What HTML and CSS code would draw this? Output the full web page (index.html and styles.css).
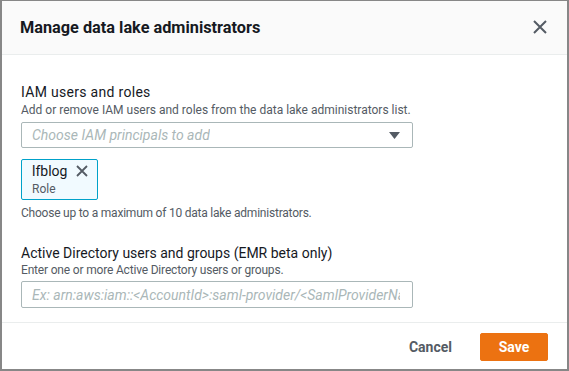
FILE: index.html
```html
<!DOCTYPE html>
<html>
<head>
<meta charset="utf-8">
<link rel="stylesheet" href="styles.css">
</head>
<body>
<div class="modal">
  <div class="header">
    <h1 class="title">Manage data lake administrators</h1>
    <svg class="close" width="14" height="14" viewBox="0 0 14 14"><path d="M1 1 L13 13 M13 1 L1 13" stroke="#545b64" stroke-width="2" fill="none"/></svg>
  </div>
  <div class="body">
    <div class="field field1">
      <div class="label">IAM users and roles</div>
      <div class="desc">Add or remove IAM users and roles from the data lake administrators list.</div>
      <div class="select">
        <span class="placeholder">Choose IAM principals to add</span>
        <svg class="caret" width="11" height="7" viewBox="0 0 11 7"><path d="M0 0 H11 L5.5 7 Z" fill="#545b64"/></svg>
      </div>
      <div class="token">
        <div class="token-text">
          <div class="token-name">lfblog</div>
          <div class="token-sub">Role</div>
        </div>
        <svg class="token-x" width="12" height="12" viewBox="0 0 12 12"><path d="M1 1 L11 11 M11 1 L1 11" stroke="#545b64" stroke-width="1.8" fill="none"/></svg>
      </div>
      <div class="hint">Choose up to a maximum of 10 data lake administrators.</div>
    </div>
    <div class="field field2">
      <div class="label">Active Directory users and groups (EMR beta only)</div>
      <div class="desc">Enter one or more Active Directory users or groups.</div>
      <div class="input">
        <span class="placeholder">Ex: arn:aws:iam::&lt;AccountId&gt;:saml-provider/&lt;SamlProviderName&gt;</span>
      </div>
    </div>
  </div>
  <div class="footer">
    <button class="btn-link">Cancel</button>
    <button class="btn-primary">Save</button>
  </div>
</div>
</body>
</html>
```

FILE: styles.css
```css
* { box-sizing: border-box; }
html, body { margin: 0; padding: 0; background: #fff; }
body { font-family: Roboto, "Liberation Sans", sans-serif; color: #16191f; }
.modal {
  width: 569px;
  height: 371px;
  border: 2px solid #878787;
  border-top-width: 1px;
  display: flex;
  flex-direction: column;
  overflow: hidden;
}
.header {
  height: 54px;
  flex: none;
  background: #fafafa;
  border-bottom: 1px solid #eaeded;
  display: flex;
  align-items: center;
  justify-content: space-between;
  padding: 0 20px 0 18px;
}
.title {
  margin: 0;
  font-size: 16.3px;
  font-weight: 700;
  color: #16191f;
}
.close { display: block; margin-top: -1px; }
.body {
  flex: 1;
  padding: 28px 0 0 19px;
}
.label { font-size: 14px; line-height: 19px; color: #16191f; }
.field1 .label { letter-spacing: 0.3px; }
.desc { font-size: 12px; line-height: 17px; color: #545b64; }
.select, .input {
  width: 392px;
  height: 26px;
  border: 1px solid #aab7b8;
  border-radius: 2px;
  margin-top: 3px;
  display: flex;
  align-items: center;
  justify-content: space-between;
  padding: 0 12px 0 10px;
}
.placeholder { font-size: 14px; font-style: italic; color: #aab7b8; white-space: nowrap; overflow: hidden; }
.caret { display: block; }
.token {
  margin-top: 11px;
  width: 77px;
  height: 41px;
  border: 1px solid #00a1c9;
  border-radius: 2px;
  background: #f1faff;
  display: flex;
  align-items: flex-start;
  padding: 3px 7px 0 10px;
  gap: 9px;
}
.token-name { font-size: 14px; line-height: 17px; color: #16191f; }
.token-sub { font-size: 12px; line-height: 16px; color: #545b64; margin-top: 1px; }
.token-x { display: block; margin-top: 2px; }
.hint { font-size: 12px; line-height: 16px; color: #545b64; margin-top: 5px; letter-spacing: -0.22px; }
.field2 { margin-top: 23px; }
.field2 .label { line-height: 18px; }
.field2 .desc { line-height: 16px; letter-spacing: -0.18px; }
.field2 .input { height: 27px; margin-top: 3px; }
.footer {
  height: 47px;
  flex: none;
  border-top: 1px solid #eaeded;
  display: flex;
  align-items: center;
  justify-content: flex-end;
  padding: 2px 19px 0 0;
  gap: 28px;
}
.btn-link {
  background: none;
  border: none;
  font-family: inherit;
  font-size: 14px;
  font-weight: 700;
  color: #545b64;
  padding: 0;
}
.btn-primary {
  font-family: inherit;
  width: 68px;
  height: 28px;
  background: #ec7211;
  border: 1px solid #ec7211;
  border-radius: 2px;
  color: #fff;
  font-size: 14px;
  font-weight: 700;
  padding: 0;
}
```
